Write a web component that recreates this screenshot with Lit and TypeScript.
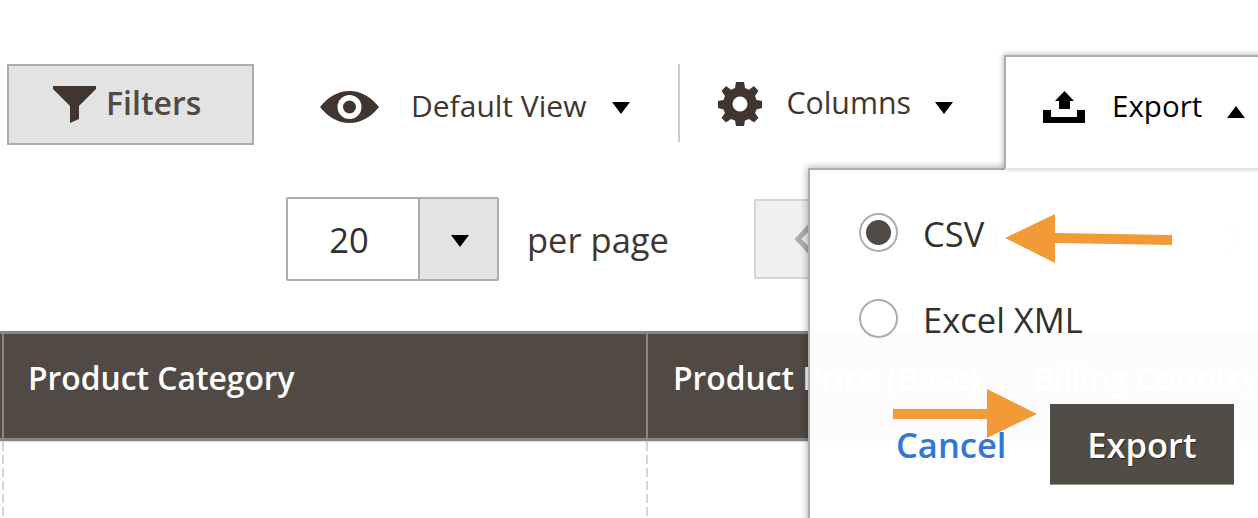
import { LitElement, html, css } from "lit";
import { customElement } from "lit/decorators.js";

const caret = (up = false) => html`<svg class="caret" viewBox="0 0 18 12" width="18" height="12"><path d="${up ? "M0 12 L9 0 L18 12Z" : "M0 0 L18 0 L9 12Z"}"/></svg>`;

@customElement("app-root")
export class AppRoot extends LitElement {
  static styles = css`
    :host { display: block; width: 1258px; height: 518px; position: relative; overflow: hidden; background: #fff;
      font-family: "Open Sans", sans-serif; color: #41362f; }
    .caret { fill: #000; display: block; flex: none; }
    .row1 { display: flex; align-items: flex-start; padding: 64px 0 0 7px; height: 197px; box-sizing: border-box; }
    .filters { width: 247px; height: 81px; box-sizing: border-box; border: 2px solid #adadad; background: #e3e3e3;
      display: flex; align-items: center; padding: 0 0 4px 44px; gap: 10px; font-size: 32px; font-weight: 600; color: #514943; }
    .filters svg { margin-top: 4px; }
    .view { display: flex; align-items: center; margin: 8px 0 0 66px; height: 70px; font-size: 30px; color: #41362f; }
    .view .lbl { margin: -4px 0 0 32px; }
    .view .caret { margin: 1px 0 0 26px; }
    .divider { width: 2px; height: 78px; background: #ccc; margin-left: 48px; }
    .cols { display: flex; align-items: center; margin: 5px 0 0 38px; height: 70px; font-size: 30.3px; }
    .cols .lbl { margin: -4px 0 0 24px; }
    .cols .caret { margin-left: 24px; margin-top: 8px; }
    .row2 { display: flex; align-items: flex-start; padding-left: 286px; height: 134px; box-sizing: border-box; }
    .select { width: 213px; height: 84px; box-sizing: border-box; border: 2px solid #adadad; border-radius: 2px; display: flex; }
    .select .val { width: 132px; font-size: 34.5px; color: #303030; display: flex; align-items: center; justify-content: center; background: #fff; border-right: 2px solid #adadad; box-sizing: border-box; padding: 0 8px 0 0; }
    .select .btn { flex: 1; background: #e3e3e3; display: flex; align-items: center; justify-content: center; padding: 3px 0 0 2px; }
    .pp { font-size: 34.5px; color: #41362f; margin: 19px 0 0 28px; white-space: nowrap; }
    .prev { width: 120px; height: 80px; margin: 2px 0 0 85px; box-sizing: border-box; border: 2px solid #d6d6d6; background: #f0f0f0; display: flex; align-items: center; padding-left: 39px; flex: none; }
    .pagefield { width: 246px; height: 80px; margin: 2px 0 0 58px; box-sizing: border-box; border: 1px solid #adadad; font-size: 34px; color: #303030; display: flex; align-items: center; padding-left: 52px; gap: 74px; flex: none; }
    .next { margin: 26px 0 0 47px; flex: none; }
    .table { height: 110px; box-sizing: border-box; background: #514943; border-top: 3px solid #8a8580; border-bottom: 3px solid #8a8580;
      display: flex; color: #fff; font-size: 31.8px; font-weight: 600; width: 1400px; }
    .th { box-sizing: border-box; height: 100%; border-left: 2px solid #8a8580; padding: 22px 0 0 25px; white-space: nowrap; }
    .th.a { margin-left: 2px; width: 644px; padding-left: 24px; }
    .th.b { width: 360px; }
    .body { display: flex; height: 77px; box-sizing: border-box; border-top: 1px solid #ddd; }
    .cell { box-sizing: border-box; width: 2px; height: 100%; flex: none;
      background: repeating-linear-gradient(180deg, #d6d6d6 0 9px, transparent 9px 13px); }
    .cell.a { margin-left: 2px; margin-right: 642px; }
    .cell.b { margin-right: 358px; }

    .tab { position: absolute; left: 1004px; top: 55px; width: 260px; height: 115px; box-sizing: border-box;
      background: #fff; border: 2px solid #adadad; border-bottom: 2px solid #e6e6e6; box-shadow: -1px -1px 5px rgba(0,0,0,.25); z-index: 3;
      display: flex; align-items: flex-start; padding: 34px 0 0 37px; color: #000; font-size: 29.5px; }
    .tab .lbl { margin: -6px 0 0 27px; }
    .tab .caret { margin: 15px 0 0 25px; }
    .panel { position: absolute; left: 808px; top: 168px; width: 460px; height: 360px; box-sizing: border-box;
      background: rgba(255,255,255,.985); border: 2px solid #adadad; border-right: none; border-bottom: none;
      box-shadow: -1px -1px 7px rgba(0,0,0,.3); z-index: 2; padding: 43px 0 0 49px; color: #303030; font-size: 34.5px; }
    .opt { display: flex; align-items: center; height: 39px; margin-bottom: 47px; gap: 25px; }
    .opt span:last-child { margin-top: 1px; }
    .radio { width: 39px; height: 39px; box-sizing: border-box; border-radius: 50%; border: 2px solid #adadad; background: #fff; display: flex; align-items: center; justify-content: center; flex: none; }
    .radio i { width: 25px; height: 25px; border-radius: 50%; background: #514943; display: block; }
    .actions { display: flex; align-items: center; padding: 19px 0 0 37px; }
    .cancel { color: #3277d6; font-size: 34.5px; font-weight: 600; width: 154px; flex: none; }
    .go { width: 184px; height: 81px; box-sizing: border-box; background: #524c46; color: #fff; font-size: 34.5px; font-weight: 600; border-bottom: 1px solid #9a9590; display: flex; align-items: center; justify-content: center; text-shadow: 1px 1px 1px rgba(0,0,0,.5); flex: none; }
    .arrow { position: absolute; z-index: 4; display: block; }
    .a1 { left: 1005px; top: 214px; }
    .a2 { left: 893px; top: 389px; }
  `;

  render() {
    return html`
      <div class="row1">
        <div class="filters">
          <svg width="43" height="37" viewBox="0 0 43 37" fill="#41362f"><path d="M0 0H43V3L26 20V33L17 37V20L0 3Z"/></svg>
          <span>Filters</span>
        </div>
        <div class="view">
          <svg width="59" height="32" viewBox="0 0 59 32"><path fill="#41362f" fill-rule="evenodd" d="M0 16C8 6 18 0 29.500 0S51 6 59 16C51 26 41 32 29.500 32S8 26 0 16ZM29.500 4A12 12 0 1 0 29.500 28A12 12 0 1 0 29.500 4Z"/><circle cx="29.500" cy="16" r="6.500" fill="#41362f"/></svg>
          <span class="lbl">Default View</span>
          ${caret()}
        </div>
        <div class="divider"></div>
        <div class="cols">
          <svg width="44" height="44" viewBox="0 0 44 44"><path fill="#41362f" fill-rule="evenodd" d="M18 0H26L27 6L31 7.700L36 4L40.500 9L37 14L38.500 18L44 19V26L38.500 27.500L37 31L40.500 36L36 40.500L31 37L27 38.500L26 44H18L17 38.500L13 37L8 40.500L3.500 36L7 31L5.500 27.500L0 26V19L5.500 18L7 14L3.500 9L8 4L13 7.700L17 6ZM22 14.500A7.500 7.500 0 1 0 22 29.500A7.500 7.500 0 1 0 22 14.500Z"/></svg>
          <span class="lbl">Columns</span>
          ${caret()}
        </div>
      </div>
      <div class="row2">
        <div class="select"><div class="val">20</div><div class="btn">${caret()}</div></div>
        <div class="pp">per page</div>
        <div class="prev"><svg width="18" height="32" viewBox="0 0 18 32"><path d="M16 2L3 16L16 30" fill="none" stroke="#adadad" stroke-width="5"/></svg></div>
        <div class="pagefield"><span>1</span><span>of 7</span></div>
        <svg class="next" width="18" height="32" viewBox="0 0 18 32"><path d="M2 2L15 16L2 30" fill="none" stroke="#adadad" stroke-width="5"/></svg>
      </div>
      <div class="table">
        <div class="th a">Product Category</div>
        <div class="th b">Product Price (Base)</div>
        <div class="th">Billing Country</div>
      </div>
      <div class="body">
        <div class="cell a"></div><div class="cell b"></div><div class="cell"></div>
      </div>

      <div class="tab">
        <svg width="42" height="32" viewBox="0 0 42 32"><path fill="#000" d="M21.500 0L31 10H27V18H16V10H12ZM0 19H8V26H34V19H42V32H0Z"/></svg>
        <span class="lbl">Export</span>
        ${caret(true)}
      </div>
      <div class="panel">
        <div class="opt"><span class="radio"><i></i></span><span>CSV</span></div>
        <div class="opt"><span class="radio"></span><span>Excel XML</span></div>
        <div class="actions"><span class="cancel">Cancel</span><div class="go">Export</div></div>
      </div>
      <svg class="arrow a1" width="168" height="50" viewBox="0 0 168 50"><path fill="#f29a38" d="M0 24L50 0V19L167 21V31L50 29V49Z"/></svg>
      <svg class="arrow a2" width="146" height="50" viewBox="0 0 146 50"><path fill="#f29a38" d="M0 20H94V0L144 25L94 49V30H0Z"/></svg>
    `;
  }
}
